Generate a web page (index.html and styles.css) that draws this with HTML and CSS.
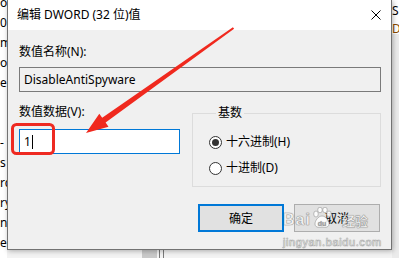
FILE: index.html
```html
<!DOCTYPE html>
<html lang="zh-CN">
<head>
  <meta charset="UTF-8" />
  <title>编辑 DWORD (32 位)值</title>
  <link rel="stylesheet" href="styles.css">
</head>
<body>
  <div class="screen">
    <div class="bg-left">
      <span>os</span>
      <span>0k</span>
      <span>m</span>
      <span>o</span>
      <span>e</span>
      <span></span>
      <span></span>
      <span>-</span>
      <span>s</span>
      <span>rc</span>
      <span>ry</span>
      <span>nt</span>
      <span>ee</span>
    </div>

    <div class="center">
      <div class="dialog">
        <div class="titlebar">
          <span class="title">编辑 DWORD (32 位)值</span>
          <svg class="close" width="10" height="10" viewBox="0 0 10 10">
            <path d="M0.5 0.5 L9.5 9.5 M9.5 0.5 L0.5 9.5" stroke="#000" stroke-width="1" fill="none" />
          </svg>
        </div>

        <div class="body">
          <div class="label">数值名称(N):</div>
          <div class="field readonly">DisableAntiSpyware</div>

          <div class="row">
            <div class="col">
              <div class="label">数值数据(V):</div>
              <div class="field active">1<span class="caret"></span></div>
            </div>
            <fieldset class="base">
              <legend>基数</legend>
              <div class="radio checked"><span class="circle"></span>十六进制(H)</div>
              <div class="radio"><span class="circle"></span>十进制(D)</div>
            </fieldset>
          </div>

          <div class="buttons">
            <button class="btn default">确定</button>
            <button class="btn">取消</button>
          </div>
        </div>
      </div>
      <div class="under">
        <span class="under-block"></span>
        <span class="under-line"></span>
        <span class="under-line"></span>
      </div>
    </div>

    <div class="bg-right">
      <div class="bg-right-top">
        <span>S</span>
        <span class="orange">D</span>
      </div>
    </div>

    <!-- annotation drawn over the screenshot -->
    <svg class="annot" width="399" height="258" viewBox="0 0 399 258">
      <rect x="12.5" y="124.5" width="41" height="29" rx="4" ry="4" fill="none" stroke="#ee2a22" stroke-width="3" />
      <polygon fill="#f0291e" points="232.9,27.2 102.2,117.8 99.3,113.7 86,133 108.5,126.7 105.6,122.6 234.1,28.8" />
    </svg>

    <div class="watermark">
      <div class="wm-top">
        <span class="wm-bai">Bai</span>
        <svg class="wm-paw" width="20" height="22" viewBox="0 0 20 22">
          <g fill="rgba(255,255,255,0.9)" stroke="rgba(140,140,140,0.7)" stroke-width="0.8">
            <ellipse cx="4" cy="7" rx="2.3" ry="3" />
            <ellipse cx="8" cy="3" rx="2.3" ry="2.8" />
            <ellipse cx="13" cy="3" rx="2.3" ry="2.8" />
            <ellipse cx="17" cy="7" rx="2.3" ry="3" />
            <path d="M10 9 C6 9 3 14 3 17 C3 20 6 21 10 20 C14 21 17 20 17 17 C17 14 14 9 10 9 Z" />
          </g>
          <text x="10" y="19" text-anchor="middle" class="wm-du">du</text>
        </svg>
        <span class="wm-jy">经验</span>
      </div>
      <div class="wm-url">jingyan.baidu.com</div>
    </div>
  </div>
</body>
</html>
```

FILE: styles.css
```css
* {
  box-sizing: border-box;
}

body {
  margin: 0;
  background: #fff;
  font-family: "Noto Sans", "Noto Sans CJK SC", sans-serif;
  font-size: 12px;
  color: #000;
}

.screen {
  position: relative;
  width: 399px;
  height: 258px;
  overflow: hidden;
  display: flex;
}

/* window behind the dialog, cropped */
.bg-left {
  width: 7px;
  flex: none;
  overflow: hidden;
  background: #fff;
  display: flex;
  flex-direction: column;
  margin-top: -7px;
  line-height: 20px;
  white-space: nowrap;
}

.bg-left span {
  height: 20px;
}

.bg-right {
  width: 7px;
  flex: none;
  overflow: hidden;
  background: #ebebeb;
}

.bg-right-top {
  height: 34px;
  background: #fff;
  display: flex;
  flex-direction: column;
  padding-top: 2px;
  line-height: 18px;
  white-space: nowrap;
}

.orange {
  color: #8a4a00;
}

.center {
  width: 385px;
  flex: none;
  display: flex;
  flex-direction: column;
}

/* dialog */
.dialog {
  position: relative;
  z-index: 1;
  height: 250px;
  display: flex;
  flex-direction: column;
  border: 1px solid #727272;
  border-top: none;
  background: #f0f0f0;
  box-shadow: 1px 1px 5px rgba(0, 0, 0, 0.3);
}

.titlebar {
  height: 30px;
  flex: none;
  background: #fff;
  display: flex;
  align-items: center;
  justify-content: space-between;
  padding: 0 10px 0 9px;
}

.title {
  line-height: 16px;
}

.close {
  display: block;
}

.body {
  flex: 1;
  padding: 14px 10px 0 11px;
}

.label {
  height: 16px;
  line-height: 16px;
}

.field {
  height: 25px;
  margin-top: 7px;
  padding-left: 4px;
  display: flex;
  align-items: center;
  border: 1px solid #7a7a7a;
  background: #f0f0f0;
}

.field.active {
  margin-top: 9px;
  border-color: #0078d7;
  background: #fff;
}

.caret {
  display: inline-block;
  width: 1px;
  height: 14px;
  margin-left: 1px;
  background: #000;
}

.row {
  display: flex;
  margin-top: 12px;
}

.col {
  width: 161px;
  flex: none;
}

.base {
  flex: 1;
  margin: 1px 0 0 12px;
  padding: 13px 0 10px 16px;
  border: 1px solid #dcdcdc;
  min-width: 0;
}

.base legend {
  margin-left: 7px;
  padding: 0 2px;
  line-height: 16px;
}

.radio {
  display: flex;
  align-items: center;
  height: 16px;
  line-height: 16px;
}

.radio + .radio {
  margin-top: 10px;
}

.circle {
  width: 13px;
  height: 13px;
  margin-right: 4px;
  border: 1px solid #333;
  border-radius: 50%;
  background: #fff;
  display: flex;
  align-items: center;
  justify-content: center;
}

.radio.checked .circle::after {
  content: "";
  width: 7px;
  height: 7px;
  border-radius: 50%;
  background: #333;
}

.buttons {
  display: flex;
  justify-content: flex-end;
  gap: 10px;
  margin-top: 17px;
  padding-right: 1px;
}

.btn {
  width: 86px;
  height: 28px;
  padding: 0;
  font-family: "Noto Sans", "Noto Sans CJK SC", sans-serif;
  font-size: 12px;
  color: #000;
  background: #e1e1e1;
  border: 1px solid #adadad;
}

.btn.default {
  border: 2px solid #0078d7;
}

/* strip under the dialog */
.under {
  flex: 1;
  display: flex;
  background: #f3f3f3;
  padding-left: 135px;
}

.under-block {
  width: 15px;
  background: #c9c9c9;
}

.under-line {
  width: 1px;
  margin-left: 2px;
  background: #7a7a7a;
}

.under-line + .under-line {
  margin-left: 3px;
}

/* overlays */
.annot {
  position: absolute;
  left: 0;
  top: 0;
  z-index: 2;
}

.watermark {
  position: absolute;
  left: 283px;
  top: 205px;
  z-index: 3;
  color: rgba(255, 255, 255, 0.92);
  -webkit-text-stroke: 0.4px rgba(130, 130, 130, 0.6);
  text-shadow: 0 0 1px rgba(0, 0, 0, 0.5);
}

.wm-top {
  display: flex;
  align-items: flex-end;
  height: 24px;
}

.wm-bai {
  font-family: "Liberation Sans", sans-serif;
  font-weight: bold;
  font-size: 16px;
  line-height: 18px;
  letter-spacing: 1px;
}

.wm-paw {
  display: block;
  margin: 0 1px;
}

.wm-du {
  font-family: "Liberation Sans", sans-serif;
  font-weight: bold;
  font-size: 7px;
  fill: rgba(150, 150, 150, 0.8);
  -webkit-text-stroke: 0;
}

.wm-jy {
  font-family: "Noto Sans CJK SC", sans-serif;
  font-weight: bold;
  font-size: 13px;
  line-height: 17px;
  margin-left: 9px;
}

.wm-url {
  margin-top: 7px;
  font-family: "Liberation Sans", sans-serif;
  font-size: 11px;
  line-height: 12px;
  letter-spacing: 0.6px;
}
```
